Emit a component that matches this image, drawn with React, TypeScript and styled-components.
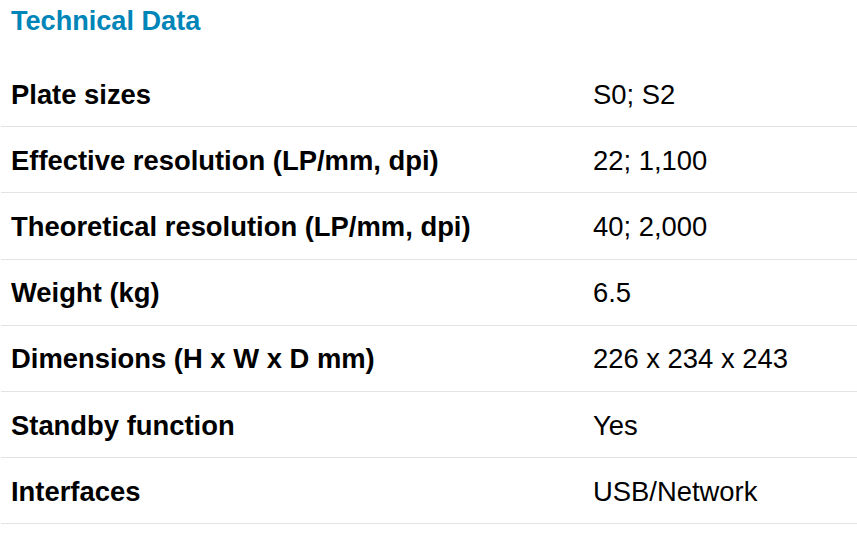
import React from "react";
import styled, { createGlobalStyle } from "styled-components";

const Global = createGlobalStyle`
  html, body { margin: 0; padding: 0; background: #ffffff; }
  body { font-family: "Liberation Sans", Arial, sans-serif; color: #000; }
`;

const Page = styled.div`
  width: 857px;
  padding: 0 0 0 1px;
  box-sizing: border-box;
`;

const Title = styled.h2`
  margin: 0;
  padding: 5px 0 0 10px;
  height: 61px;
  box-sizing: border-box;
  font-size: 27.1px;
  line-height: 32px;
  font-weight: 700;
  color: #0085b8;
`;

const Table = styled.div`
  display: flex;
  flex-direction: column;
`;

const Row = styled.div`
  display: grid;
  grid-template-columns: 582px 1fr;
  align-items: center;
  height: 66.2px;
  box-sizing: border-box;
  border-bottom: 1px solid #e3e3e3;
  padding: 2px 0 0 0;
`;

const Label = styled.div`
  padding-left: 10px;
  font-size: 27.4px;
  font-weight: 700;
`;

const Value = styled.div`
  padding-left: 10px;
  font-size: 27.4px;
  font-weight: 400;
`;

const data: [string, string][] = [
  ["Plate sizes", "S0; S2"],
  ["Effective resolution (LP/mm, dpi)", "22; 1,100"],
  ["Theoretical resolution (LP/mm, dpi)", "40; 2,000"],
  ["Weight (kg)", "6.5"],
  ["Dimensions (H x W x D mm)", "226 x 234 x 243"],
  ["Standby function", "Yes"],
  ["Interfaces", "USB/Network"],
];

export default function App() {
  return (
    <Page>
      <Global />
      <Title>Technical Data</Title>
      <Table>
        {data.map(([k, v]) => (
          <Row key={k}>
            <Label>{k}</Label>
            <Value>{v}</Value>
          </Row>
        ))}
      </Table>
    </Page>
  );
}
